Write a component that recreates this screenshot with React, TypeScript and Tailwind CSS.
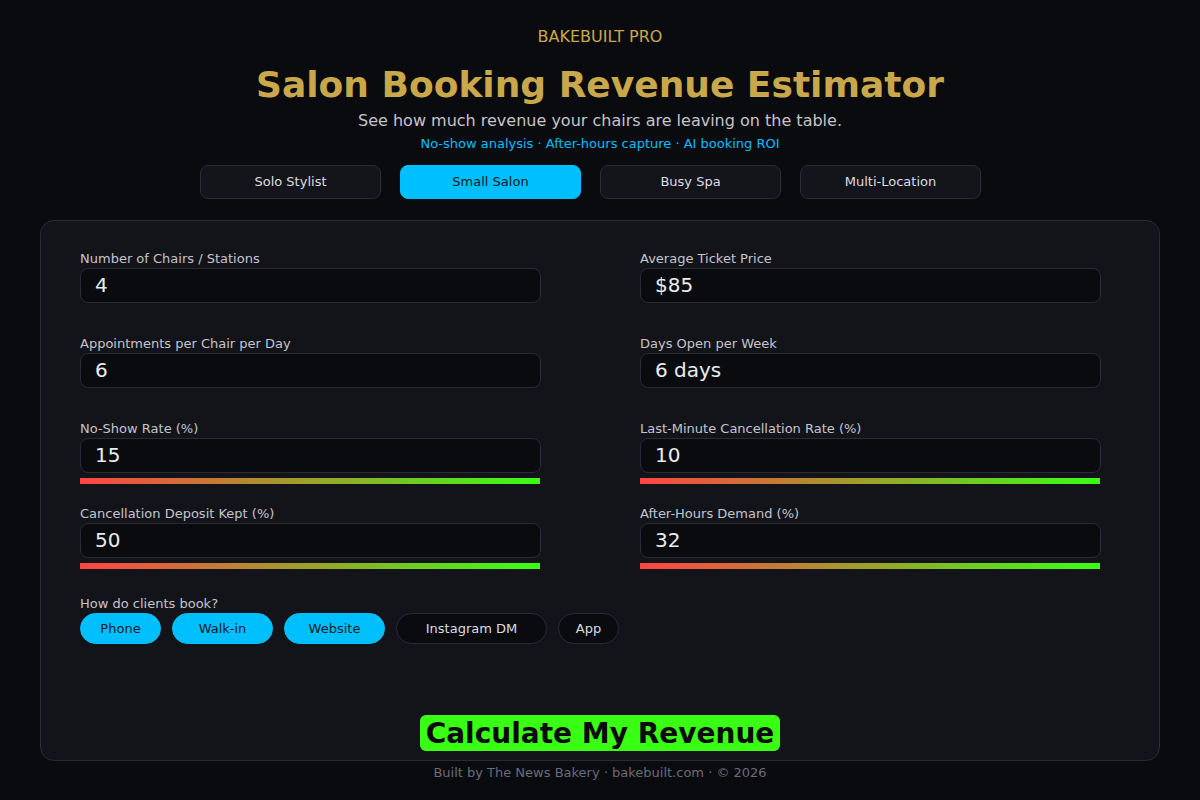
import { useState } from "react";

const FONT = { fontFamily: '"DejaVu Sans", "Liberation Sans", sans-serif' };

type Field = { label: string; value: string; bar?: boolean };

const LEFT: Field[] = [
  { label: "Number of Chairs / Stations", value: "4" },
  { label: "Appointments per Chair per Day", value: "6" },
  { label: "No-Show Rate (%)", value: "15", bar: true },
  { label: "Cancellation Deposit Kept (%)", value: "50", bar: true },
];

const RIGHT: Field[] = [
  { label: "Average Ticket Price", value: "$85" },
  { label: "Days Open per Week", value: "6 days" },
  { label: "Last-Minute Cancellation Rate (%)", value: "10", bar: true },
  { label: "After-Hours Demand (%)", value: "32", bar: true },
];

const PRESETS = ["Solo Stylist", "Small Salon", "Busy Spa", "Multi-Location"];

const CHANNELS = [
  { name: "Phone", w: "w-[81px]", on: true },
  { name: "Walk-in", w: "w-[101px]", on: true },
  { name: "Website", w: "w-[101px]", on: true },
  { name: "Instagram DM", w: "w-[151px]", on: false },
  { name: "App", w: "w-[61px]", on: false },
];

export default function App() {
  const [preset, setPreset] = useState("Small Salon");

  return (
    <div className="min-h-[800px] bg-[#0a0b0f] text-[#e6e6ea]" style={FONT}>
      <div className="flex flex-col items-center pt-[28px]">
        <div className="text-[16px] leading-[18px] text-[#c9a84c]">BAKEBUILT PRO</div>
        <h1 className="mt-[19px] text-[36px] font-bold leading-[40px] text-[#c9a84c]">
          Salon Booking Revenue Estimator
        </h1>
        <p className="mt-[6px] text-[16px] leading-[20px] text-[#c4c4c8]">
          See how much revenue your chairs are leaving on the table.
        </p>
        <p className="mt-[5px] text-[13px] leading-[16px] text-[#00bfff]">
          No-show analysis · After-hours capture · AI booking ROI
        </p>
        <div className="mt-[13px] flex">
          {PRESETS.map((p) => (
            <button
              key={p}
              onClick={() => setPreset(p)}
              className={`mr-[19px] h-[34px] w-[181px] rounded-[8px] border text-[13px] ${
                preset === p
                  ? "border-[#00bfff] bg-[#00bfff] text-[#0b1a24]"
                  : "border-[#2a2b35] bg-[#14151b] text-[#dcdce0]"
              }`}
            >
              {p}
            </button>
          ))}
        </div>
      </div>

      <div className="mx-[40px] mt-[21px] h-[541px] rounded-[14px] border border-[#2a2b35] bg-[#13141a] px-[39px] pt-[30px]">
        <div className="grid grid-cols-[560px_460px]">
          {[LEFT, RIGHT].map((col, i) => (
            <div key={i} className="flex flex-col">
              {col.map((f) => (
                <FieldBox key={f.label} f={f} />
              ))}
            </div>
          ))}
        </div>

        <div className="mt-[5px] text-[13px] leading-[16px] text-[#c4c4cc]">How do clients book?</div>
        <div className="mt-[1px] flex gap-[11px]">
          {CHANNELS.map((c) => (
            <span
              key={c.name}
              className={`flex h-[31px] ${c.w} items-center justify-center rounded-full border text-[13px] ${
                c.on
                  ? "border-[#00bfff] bg-[#00bfff] text-[#0b1a24]"
                  : "border-[#2a2b35] bg-[#0a0b0f] text-[#dcdce0]"
              }`}
            >
              {c.name}
            </span>
          ))}
        </div>

        <div className="mt-[71px] flex justify-center">
          <button className="h-[36px] rounded-[6px] bg-[#39ff14] px-[6px] text-[28px] font-bold leading-[38px] text-[#0a0a0a]">
            Calculate My Revenue
          </button>
        </div>
      </div>

      <div className="pt-[4px] text-center text-[13px] leading-[16px] text-[#6b6c78]">
        Built by The News Bakery · bakebuilt.com · © 2026
      </div>
    </div>
  );
}

function FieldBox({ f }: { f: Field }) {
  return (
    <div className="h-[85px]">
      <div className="text-[13px] leading-[16px] text-[#c4c4cc]">{f.label}</div>
      <div className="mt-[1px] flex h-[35px] w-[461px] items-center rounded-[8px] border border-[#2a2b35] bg-[#0a0b0f] pb-[2px] pl-[14px] text-[20px] text-[#ececf0]">
        {f.value}
      </div>
      {/* plain sRGB blend, red -> green, like the original track */}
      {f.bar && <div className="mt-[5px] h-[6px] w-[460px] bg-[linear-gradient(to_right,#ff4444,#39ff14)]" />}
    </div>
  );
}
